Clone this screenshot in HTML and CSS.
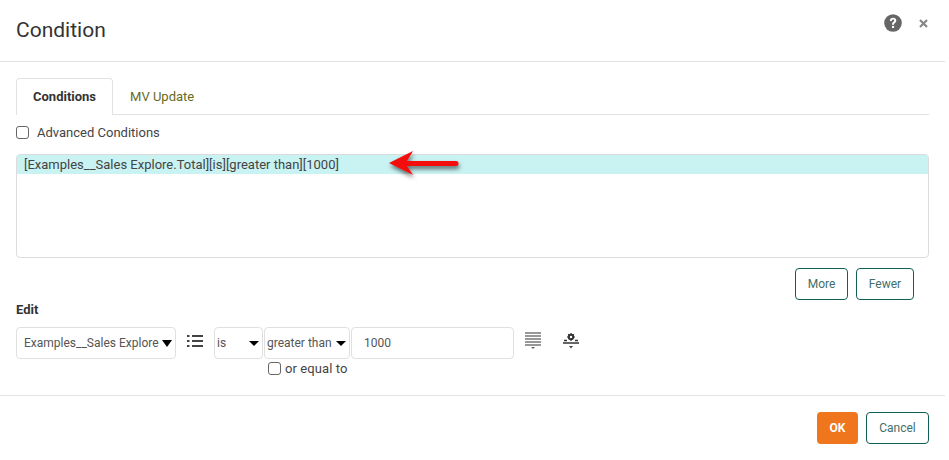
FILE: index.html
```html
<!DOCTYPE html>
<html lang="en">
<head>
    <meta charset="UTF-8">
    <title>Condition</title>
    <link rel="stylesheet" href="styles.css">
</head>
<body>
    <div class="dialog">
        <header class="dialog-header">
            <h1>Condition</h1>
            <div class="header-icons">
                <svg class="help-icon" width="18" height="18" viewBox="0 0 18 18">
                    <circle cx="9" cy="9" r="8.800" fill="#666"/>
                    <path d="M5.800 7c0-2.100 1.400-3.300 3.300-3.300s3.200 1.200 3.200 2.900c0 2.400-2.300 2.400-2.300 4.200H8c0-2.900 2.200-2.900 2.200-4.200 0-.7-.5-1.100-1.200-1.100S7.800 6 7.800 7z" fill="#fff"/>
                    <rect x="8" y="11.900" width="2.100" height="2.100" fill="#fff"/>
                </svg>
                <svg class="close-icon" width="9" height="9" viewBox="0 0 9 9">
                    <path d="M1 1l7 7M8 1L1 8" stroke="#888" stroke-width="2.200"/>
                </svg>
            </div>
        </header>

        <div class="dialog-body">
            <div class="tabs">
                <div class="tab active">Conditions</div>
                <div class="tab">MV Update</div>
            </div>

            <label class="check-row advanced">
                <input type="checkbox">
                <span>Advanced Conditions</span>
            </label>

            <div class="condition-list">
                <div class="condition-row">[Examples__Sales Explore.Total][is][greater than][1000]</div>
            </div>

            <div class="list-buttons">
                <button class="btn btn-more">More</button>
                <button class="btn btn-fewer">Fewer</button>
            </div>

            <div class="edit-label">Edit</div>
            <div class="edit-row">
                <div class="select field-name">Examples__Sales Explore</div>
                <svg class="tool-icon list-icon" width="16" height="12" viewBox="0 0 16 12">
                    <path d="M0 1h2.500M0 6h2.500M0 11h2.500M5 1h11M5 6h11M5 11h11" stroke="#444" stroke-width="1.800"/>
                </svg>
                <div class="select field-is">is</div>
                <div class="select field-op">greater than</div>
                <input class="field-value" type="text" value="1000">
                <svg class="tool-icon lines-icon" width="16" height="17" viewBox="0 0 16 17">
                    <path d="M0 1h16M0 4h16M0 7h16M0 10h16M0 13h16" stroke="#777" stroke-width="1.500"/>
                    <path d="M6 15h4l-2 2z" fill="#666"/>
                </svg>
                <svg class="tool-icon gear-icon" width="16" height="17" viewBox="0 0 16 17">
                    <circle cx="8" cy="5" r="2.200" fill="none" stroke="#333" stroke-width="2"/>
                    <path d="M8 1v1.200M8 7.800V9M4 5h1M11 5h1M5.200 2.200l.8.800M10.800 2.200l-.8.800" stroke="#333" stroke-width="1.200"/>
                    <path d="M1 8.500h3M12 8.500h3M0 11h16" stroke="#333" stroke-width="1.300"/>
                    <path d="M6 14h4l-2 2.500z" fill="#444"/>
                </svg>
            </div>
            <label class="check-row or-equal">
                <input type="checkbox">
                <span>or equal to</span>
            </label>
        </div>

        <footer class="dialog-footer">
            <button class="btn btn-ok">OK</button>
            <button class="btn btn-cancel">Cancel</button>
        </footer>

        <svg class="arrow" width="90" height="40" viewBox="0 0 90 40">
            <defs>
                <filter id="arrowShadow" x="-15%" y="-30%" width="130%" height="170%">
                    <feDropShadow dx="1" dy="3" stdDeviation="2" flood-color="#000" flood-opacity="0.55"/>
                </filter>
            </defs>
            <path d="M5 16L29 4l-6 10h49a2.500 2.500 0 0 1 0 5H23l6 9z" fill="#f40a0a" filter="url(#arrowShadow)"/>
        </svg>
    </div>
</body>
</html>
```

FILE: styles.css
```css
body {
    font-family: Roboto, "Liberation Sans", sans-serif;
    font-size: 13px;
    color: #444;
    margin: 0;
    background-color: #fff;
}

.dialog {
    position: relative;
    width: 945px;
    height: 460px;
}

.dialog-header {
    display: flex;
    justify-content: space-between;
    height: 61px;
    padding: 0 16px;
    border-bottom: 1px solid #e2e2e2;
}

.dialog-header h1 {
    margin: 18px 0 0;
    font-size: 21px;
    line-height: 24px;
    font-weight: 400;
    color: #333;
}

.header-icons {
    display: flex;
    align-items: center;
    gap: 17px;
    height: 46px;
    margin-right: 1px;
}

.dialog-body {
    height: 333px;
    padding: 16px 16px 0;
    box-sizing: border-box;
}

.tabs {
    display: flex;
    height: 37px;
    box-sizing: border-box;
    border-bottom: 1px solid #e2e2e2;
}

.tab {
    padding: 0 17px;
    line-height: 38px;
    color: #666a1c;
}

.tab.active {
    height: 36px;
    font-weight: 700;
    color: #333;
    background-color: #fff;
    border: 1px solid #e2e2e2;
    border-bottom: none;
    border-radius: 4px 4px 0 0;
    padding: 0 16px;
    line-height: 36px;
}

.check-row {
    display: flex;
    align-items: center;
}

.check-row input {
    appearance: none;
    width: 13px;
    height: 13px;
    margin: 0;
    background-color: #fff;
    border: 1px solid #666;
    border-radius: 3px;
}

.advanced {
    gap: 8px;
    height: 16px;
    margin-top: 9px;
}

.condition-list {
    height: 104px;
    margin-top: 14px;
    width: 913px;
    box-sizing: border-box;
    border: 1px solid #dcdcdc;
    border-radius: 4px;
}

.condition-row {
    height: 19px;
    line-height: 20px;
    padding-left: 7px;
    background-color: #c9f2f2;
}

.list-buttons {
    display: flex;
    justify-content: flex-end;
    gap: 8px;
    margin-top: 10px;
    padding-right: 15px;
}

.btn {
    font-family: inherit;
    font-size: 12px;
    height: 32px;
    padding: 0;
    color: #3f6f6a;
    background-color: #fff;
    border: 1px solid #0f5f57;
    border-radius: 4px;
}

.btn-more {
    width: 53px;
}

.btn-fewer {
    width: 58px;
}

.edit-label {
    font-weight: 700;
    line-height: 14px;
    margin-top: 3px;
    color: #333;
}

.edit-row {
    display: flex;
    align-items: flex-start;
    margin-top: 10px;
}

.select,
.field-value {
    height: 32px;
    box-sizing: border-box;
    font-size: 12px;
    line-height: 30px;
    background-color: #fff;
    border: 1px solid #e0e0e0;
    border-radius: 4px;
    color: #555;
}

.select {
    position: relative;
}

.select::after {
    content: "";
    position: absolute;
    right: 3px;
    top: 13px;
    border-top: 5px solid #000;
    border-left: 5px solid transparent;
    border-right: 5px solid transparent;
}

.field-name::after {
    top: 12px;
    border-top-width: 7px;
}

.field-name {
    width: 160px;
    padding-left: 7px;
}

.field-is {
    width: 49px;
    padding-left: 2px;
}

.field-op {
    width: 86px;
    margin-left: 1px;
    padding-left: 2px;
}

.field-value {
    width: 163px;
    margin-left: 1px;
    padding: 0 12px;
    font-family: inherit;
    outline: none;
}

.tool-icon {
    flex: none;
}

.list-icon {
    margin: 8px 11px 0;
}

.lines-icon {
    margin: 5px 0 0 11px;
}

.gear-icon {
    margin: 5px 0 0 22px;
}

.or-equal {
    gap: 4px;
    height: 16px;
    margin: 1px 0 0 252px;
}

.or-equal span {
    letter-spacing: 0.1px;
}

.dialog-footer {
    display: flex;
    justify-content: flex-end;
    gap: 8px;
    height: 65px;
    box-sizing: border-box;
    padding: 16px 16px 0 0;
    border-top: 1px solid #e2e2e2;
}

.btn-ok {
    width: 41px;
    font-weight: 700;
    color: #fff;
    background-color: #f0761e;
    border: none;
}

.btn-cancel {
    width: 63px;
}

.arrow {
    position: absolute;
    left: 384px;
    top: 147px;
}
```
